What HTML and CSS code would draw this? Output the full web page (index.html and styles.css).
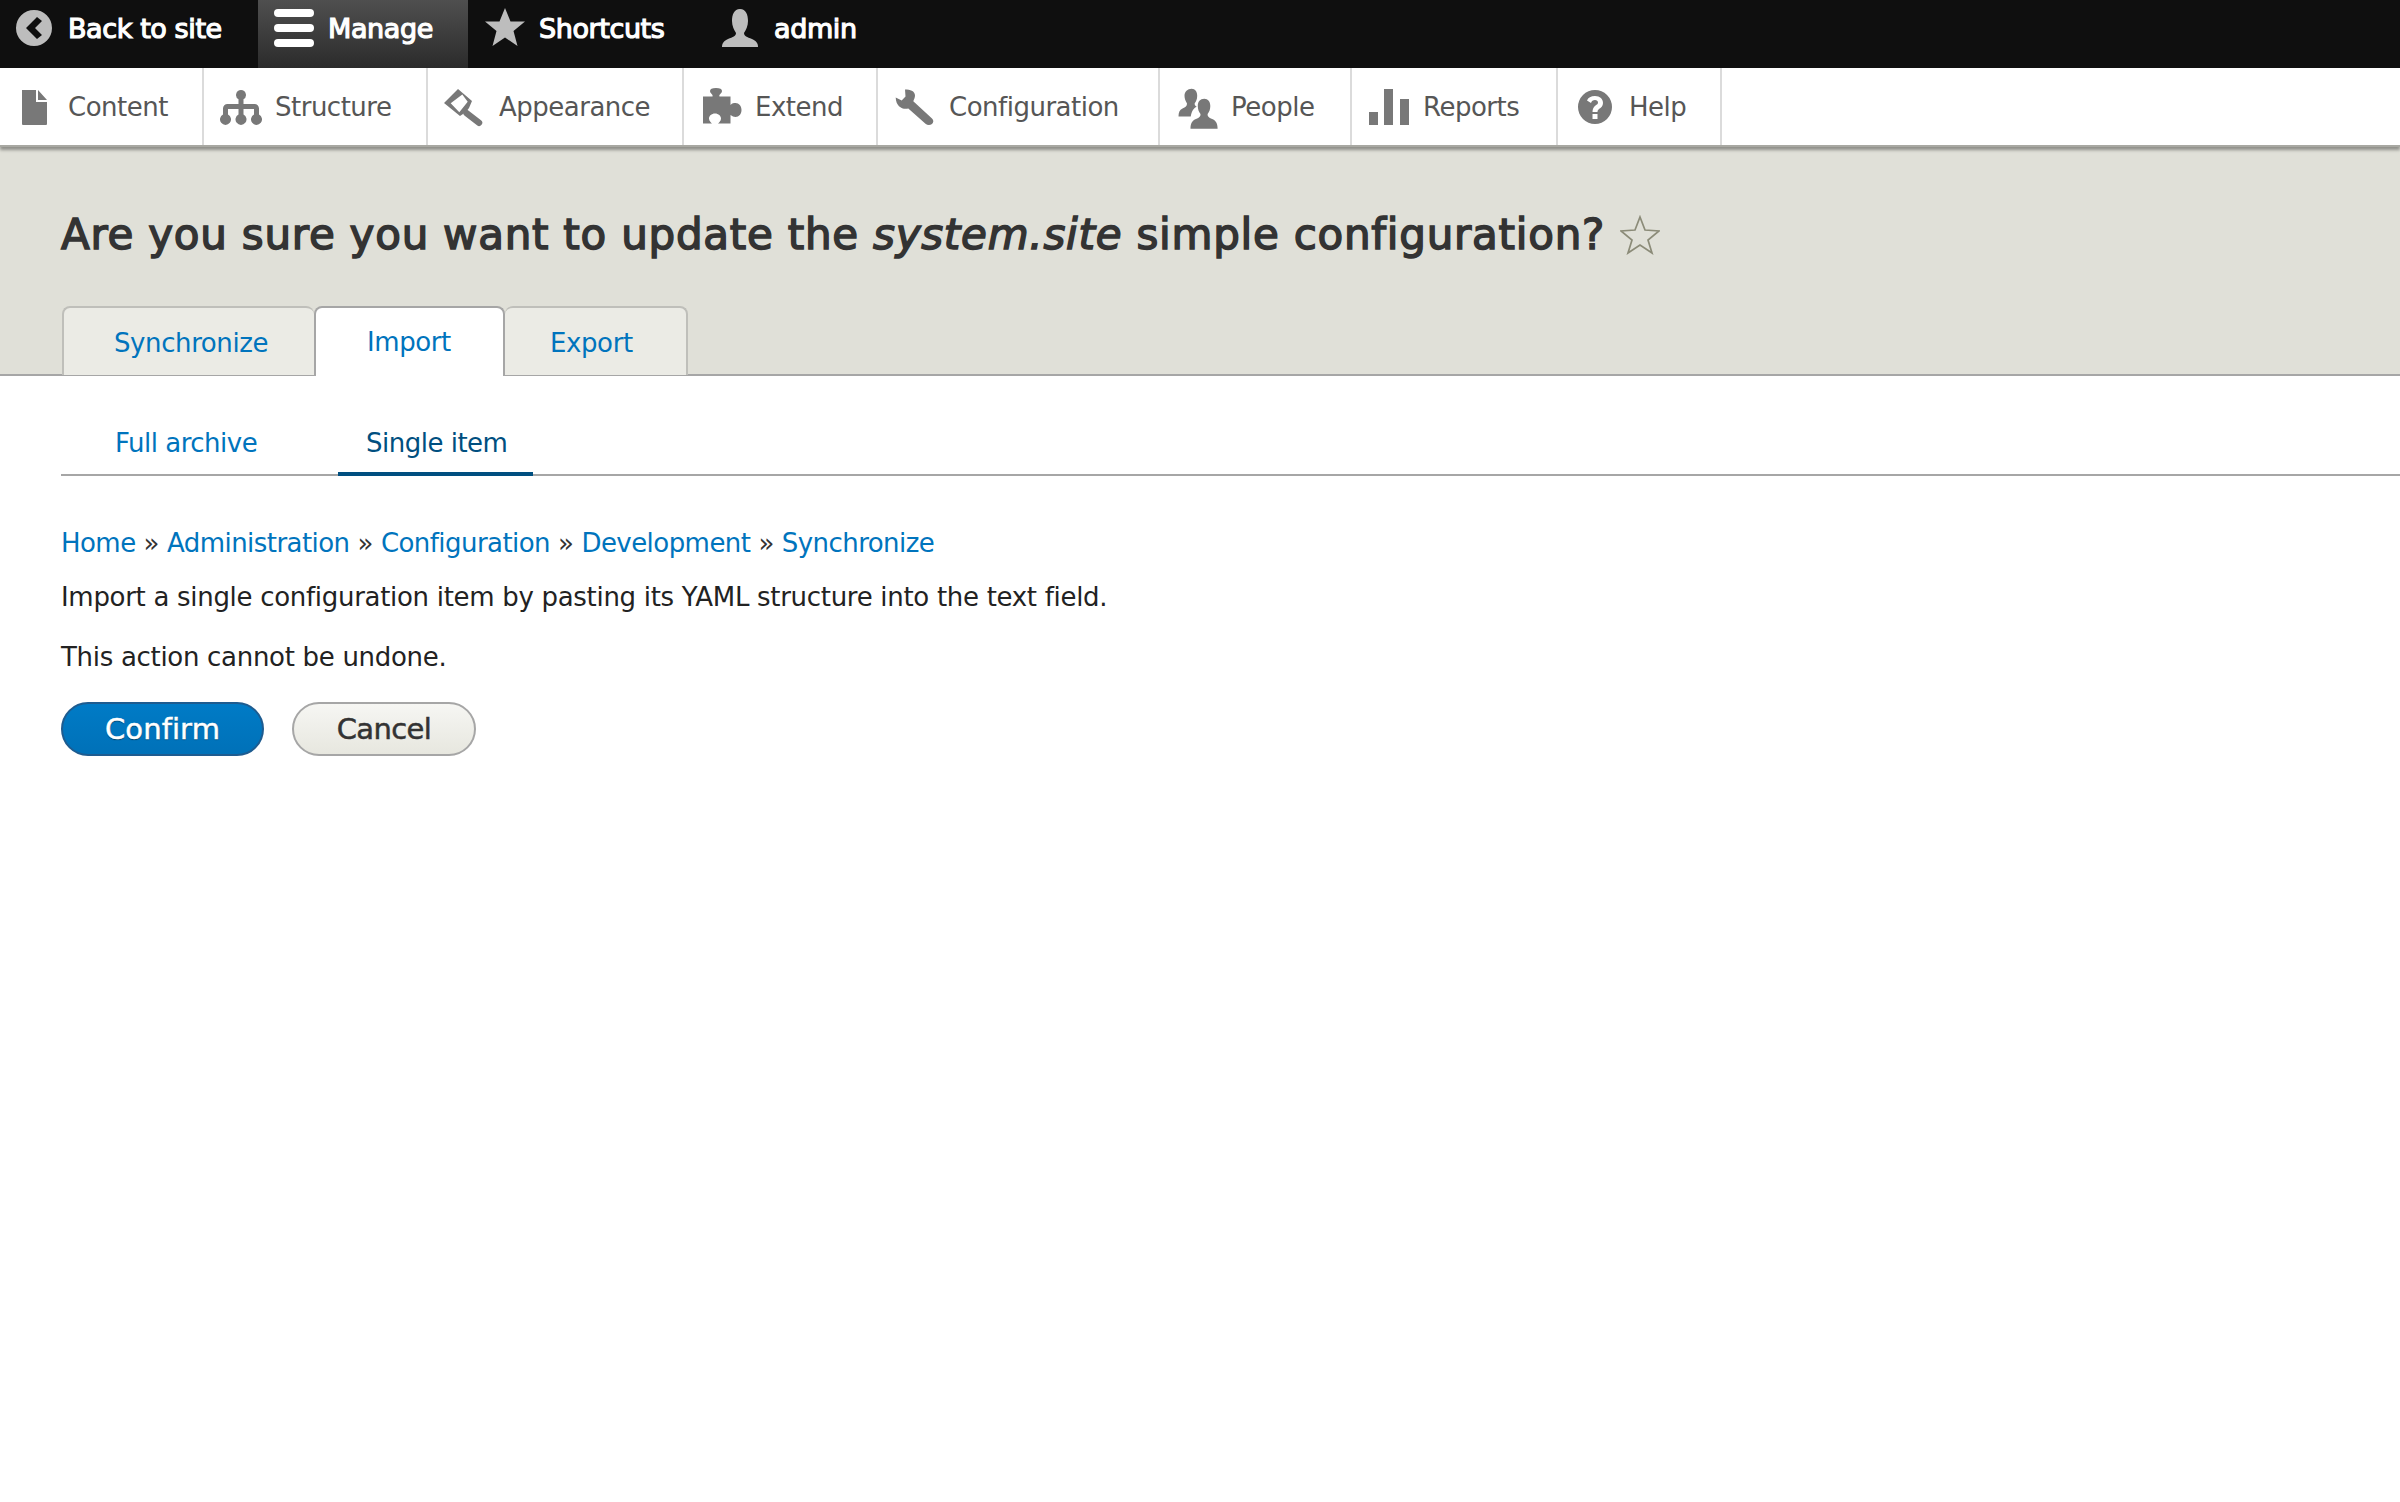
FILE: index.html
```html
<!DOCTYPE html>
<html lang="en">
<head>
<meta charset="utf-8">
<title>Are you sure you want to update the system.site simple configuration?</title>
<link rel="stylesheet" href="styles.css">
</head>
<body>
<nav class="bar">
  <a class="bar-item back"><svg class="bar-icon" viewBox="0 0 40 40"><path fill="#bdbdbd" fill-rule="evenodd" d="M20 2a18 18 0 1 0 0 36a18 18 0 1 0 0-36zM23 9l5 4-7 7 7 7-5 4-11-11z"/></svg>Back to site</a>
  <a class="bar-item manage"><svg class="bar-icon" viewBox="0 0 40 40"><g fill="#fff"><rect x="0" y="1" width="40" height="8" rx="4"/><rect x="0" y="16" width="40" height="8" rx="4"/><rect x="0" y="31" width="40" height="8" rx="4"/></g></svg>Manage</a>
  <a class="bar-item shortcuts"><svg class="bar-icon" viewBox="0 0 40 40"><path fill="#bdbdbd" d="M20 0l5.500 13.500 14.500 0-11.500 9.500 4 15-12.500-8.500-12.500 8.500 4-15L0 13.500l14.500 0z"/></svg>Shortcuts</a>
  <a class="bar-item user"><svg class="bar-icon" viewBox="0 0 40 40"><path fill="#bdbdbd" d="M20 1c6 0 8 6 8 12 0 5-2 9-4 12 0 3 3 4 8 6 4 2 6 4 6 8H2c0-4 2-6 6-8 5-2 8-3 8-6-2-3-4-7-4-12 0-6 2-12 8-12z"/></svg>admin</a>
</nav>
<nav class="tray">
  <a class="tray-item"><svg class="tray-icon" viewBox="0 0 40 40"><path d="M4 3h14v12h11v22a1 1 0 0 1-1 1H5a1 1 0 0 1-1-1zM20 3l9 10h-9z"/></svg>Content</a>
  <a class="tray-item"><svg class="tray-icon" viewBox="0 0 40 40"><path d="M20 3a5 5 0 0 1 2.500 9.300V17h11c2.500 0 4.500 2 4.500 4.500v6a5.500 5.500 0 1 1-5 0V22H22.500v5.500a5.500 5.500 0 1 1-5 0V22H7v5.500a5.500 5.500 0 1 1-5 0v-6C2 19 4 17 6.500 17h11v-4.700A5 5 0 0 1 20 3z"/></svg>Structure</a>
  <a class="tray-item"><svg class="tray-icon" viewBox="0 0 40 40"><path fill-rule="evenodd" d="M-1 16L13 2l14 12-3 7-3 4-6 4zM5.700 16.200l8.600 9 8.400-10.400-5.400-7.300z"/><path fill="none" stroke="#787878" stroke-width="6.500" stroke-linecap="round" d="M21.700 26.200L34 35.800"/></svg>Appearance</a>
  <a class="tray-item"><svg class="tray-icon" viewBox="0 0 40 40"><path d="M2 9.500h9.500c1-2-2.500-3-2.500-5.500C9 2 11 1 15 1s6 1 6 3c0 2.500-3.500 3.500-2.500 5.500H29.500V18c2-2 3-2 5-2 3.500 0 6 3 6 7s-2.500 7-6 7c-2 0-3-1-5-2v8.500H17c1-1 3-2.500 3-5s-2.500-5-6-5-6 2.500-6 5 2 4 3 5H2z"/></svg>Extend</a>
  <a class="tray-item"><svg class="tray-icon" viewBox="0 0 40 40"><path d="M10 2.500C15 2.500 20 4 20 8.500C20 10.500 19 12.500 18.300 14.200L37 31.500C39 33.500 38.500 35.500 37 37C35 38.500 32.500 38.500 30.500 36.800L13.300 21.500C8 23 1 20 .7 10.500L6.700 13.500L10.500 9.500Z"/></svg>Configuration</a>
  <a class="tray-item"><svg class="tray-icon" viewBox="0 0 40 40"><path d="M14.700 1.800c3.500 0 5.500 3 5.500 7 0 3-1 5.500-2.500 7.500-.3 1.500.5 2.700 2 3.500-3 1.500-5 4-6 9.700H1.500c0-4 1-6.700 4-8 3-1.300 4.500-2.500 4.500-5-1.500-2.500-2.500-5-2.500-7.700 0-4 3-7 7.200-7z"/><path d="M27.300 11.800c3.700 0 6 3 6 7.200 0 3.300-1 6-2.700 8-.3 2.200 1 3.500 4.500 5 3.500 1.500 5.500 4 5.500 9.800H13.500c0-5.800 2-8.300 5.500-9.800 3.500-1.500 4.800-2.800 4.500-5-1.700-2-2.700-4.700-2.700-8 0-4.200 2.300-7.200 6.500-7.200z"/></svg>People</a>
  <a class="tray-item"><svg class="tray-icon" viewBox="0 0 40 40"><path d="M0 25h9v13H0zM15 2h9v36h-9zM31 12h9v26h-9z"/></svg>Reports</a>
  <a class="tray-item help"><svg class="tray-icon" viewBox="0 0 40 40"><path fill-rule="evenodd" d="M20 3a17 17 0 1 0 0 34a17 17 0 1 0 0-34zM20 9c5 0 8 3 8 7 0 3-2 5-4 6-1 1-1.500 1.500-1.500 3h-5c0-3 1-5 3-6.500 1.500-1 2.500-1.500 2.500-3 0-1.500-1.200-2.500-3-2.500-2 0-3.500 1-4 3l-4-2.500C13 10.500 16 9 20 9zM17.500 27h5v5h-5z"/></svg>Help</a>
</nav>
<header class="head">
  <h1 class="title">Are you sure you want to update the <em>system.site</em> simple configuration?<svg class="fav" viewBox="0 0 40 40"><path fill="none" stroke="#8b8b78" stroke-width="1.700" d="M20 2l5 13 14 1-11 9 4 13-12-8-12 8 4-13L1 16l14-1z"/></svg></h1>
  <ul class="tabs">
    <li class="tab sync"><a>Synchronize</a></li>
    <li class="tab import is-active"><a>Import</a></li>
    <li class="tab export"><a>Export</a></li>
  </ul>
</header>
<ul class="subtabs">
  <li class="subtab full"><a>Full archive</a></li>
  <li class="subtab single is-active"><a>Single item</a></li>
</ul>
<main class="content">
  <ol class="crumbs">
    <li><a>Home</a></li><li class="sep">»</li>
    <li><a>Administration</a></li><li class="sep">»</li>
    <li><a>Configuration</a></li><li class="sep">»</li>
    <li><a>Development</a></li><li class="sep">»</li>
    <li><a>Synchronize</a></li>
  </ol>
  <p class="text first">Import a single configuration item by pasting its YAML structure into the text field.</p>
  <p class="text">This action cannot be undone.</p>
  <div class="actions">
    <button class="btn primary" type="button">Confirm</button>
    <button class="btn" type="button">Cancel</button>
  </div>
</main>
</body>
</html>
```

FILE: styles.css
```css
* { box-sizing: border-box; }
html, body { margin: 0; padding: 0; background: #fff; }
body {
  font-family: "DejaVu Sans", "Liberation Sans", sans-serif;
  font-size: 26px;
  letter-spacing: -0.3px;
  color: #222330;
}
ul, ol { list-style: none; margin: 0; padding: 0; }

.bar {
  display: flex;
  height: 68px;
  background: #0f0f0f;
  color: #fff;
  font-size: 27px;
  letter-spacing: -0.4px;
  -webkit-text-stroke: 1.2px #fff;
}
.bar-item { display: flex; align-items: center; height: 68px; padding-bottom: 12px; }
.bar-icon { width: 40px; height: 40px; margin-right: 14px; flex: none; }
.back { padding-left: 14px; width: 258px; }
.manage {
  width: 210px;
  padding-left: 16px;
  background: linear-gradient(#4f4f4f, #2b2b2b);
}
.shortcuts { width: 235px; padding-left: 17px; }
.user { padding-left: 17px; }

.tray {
  position: relative;
  display: grid;
  grid-template-columns: 204px 224px 256px 194px 282px 192px 206px 164px;
  justify-content: start;
  height: 79px;
  background: #fff;
  color: #565656;
  box-shadow: 0 3px 3px #8f8f8a;
  border-bottom: 2px solid #a8a8a2;
  letter-spacing: -0.5px;
}
.tray-item {
  display: flex;
  align-items: center;
  padding-left: 17px;
  border-right: 2px solid #dbdbdb;
}
.tray-icon { width: 40px; height: 40px; margin-right: 14px; fill: #787878; flex: none; overflow: visible; }
.tray-item:first-child { padding-left: 18px; }
.tray-item:first-child .tray-icon { margin-right: 10px; }

.head { height: 229px; padding: 0 61px; background: #e0e0d8; border-bottom: 2px solid #a6a6a6; }
.title {
  display: flex;
  margin: 0;
  padding-top: 62px;
  height: 158px;
  font-size: 42px;
  line-height: 52px;
  font-weight: normal;
  letter-spacing: 0.75px;
  -webkit-text-stroke: 1.5px #333;
  color: #333333;
  white-space: pre-wrap;
}
.title em { font-style: oblique; }
.fav { width: 40px; height: 40px; margin: 6px 0 0 15px; flex: none; }

.tabs { display: flex; align-items: flex-end; height: 69px; padding-left: 1px; }
.tab {
  height: 69px;
  margin-bottom: -1px;
  padding-top: 17px;
  background: #ebebe5;
  border: 2px solid #bfbfba;
  border-bottom: 0;
  border-radius: 8px 8px 0 0;
  color: #0074bd;
  line-height: 36px;
  letter-spacing: -0.4px;
}
.tab.sync { width: 252px; padding-left: 50px; border-right: 0; }
.tab.import { width: 191px; padding-left: 51px; }
.tab.export { width: 183px; padding-left: 45px; border-left: 0; }
.tab.is-active { background: #fff; border-color: #a6a6a6; height: 70px; margin-bottom: -2px; position: relative; padding-top: 16px; }

.subtabs {
  display: flex;
  height: 100px;
  margin-left: 61px;
  padding-left: 54px;
  border-bottom: 2px solid #a6a6a6;
  line-height: 36px;
  letter-spacing: -0.5px;
  color: #0074bd;
}
.subtab { padding-top: 49px; }
.subtab.full { width: 223px; }
.subtab.single {
  width: 195px;
  padding-left: 28px;
  height: 100px;
  color: #004f80;
  border-bottom: 4px solid #004f80;
}

.content { padding: 48px 61px 0; }
.crumbs { display: flex; gap: 8px; color: #0074bd; line-height: 38px; letter-spacing: -0.55px; }
.crumbs .sep { color: #333; }
.text { margin: 0; line-height: 38px; color: #222; }
.text.first { margin: 16px 0 22px; }
.actions { display: flex; gap: 28px; margin-top: 26px; }
.btn {
  height: 54px;
  width: 184px;
  padding: 0;
  border: 2px solid #a6a6a6;
  border-radius: 27px;
  background: linear-gradient(#f6f6f3, #e7e7df);
  color: #333;
  font: inherit;
  font-size: 29px;
  letter-spacing: -0.6px;
  -webkit-text-stroke: 0.5px currentColor;
}
.btn.primary {
  width: 203px;
  color: #fff;
  background: linear-gradient(#007bc6, #0071b8);
  border-color: #1e5c90;
  letter-spacing: 0.1px;
  text-shadow: 0 1px 1px rgba(0,0,0,.5);
}
```
